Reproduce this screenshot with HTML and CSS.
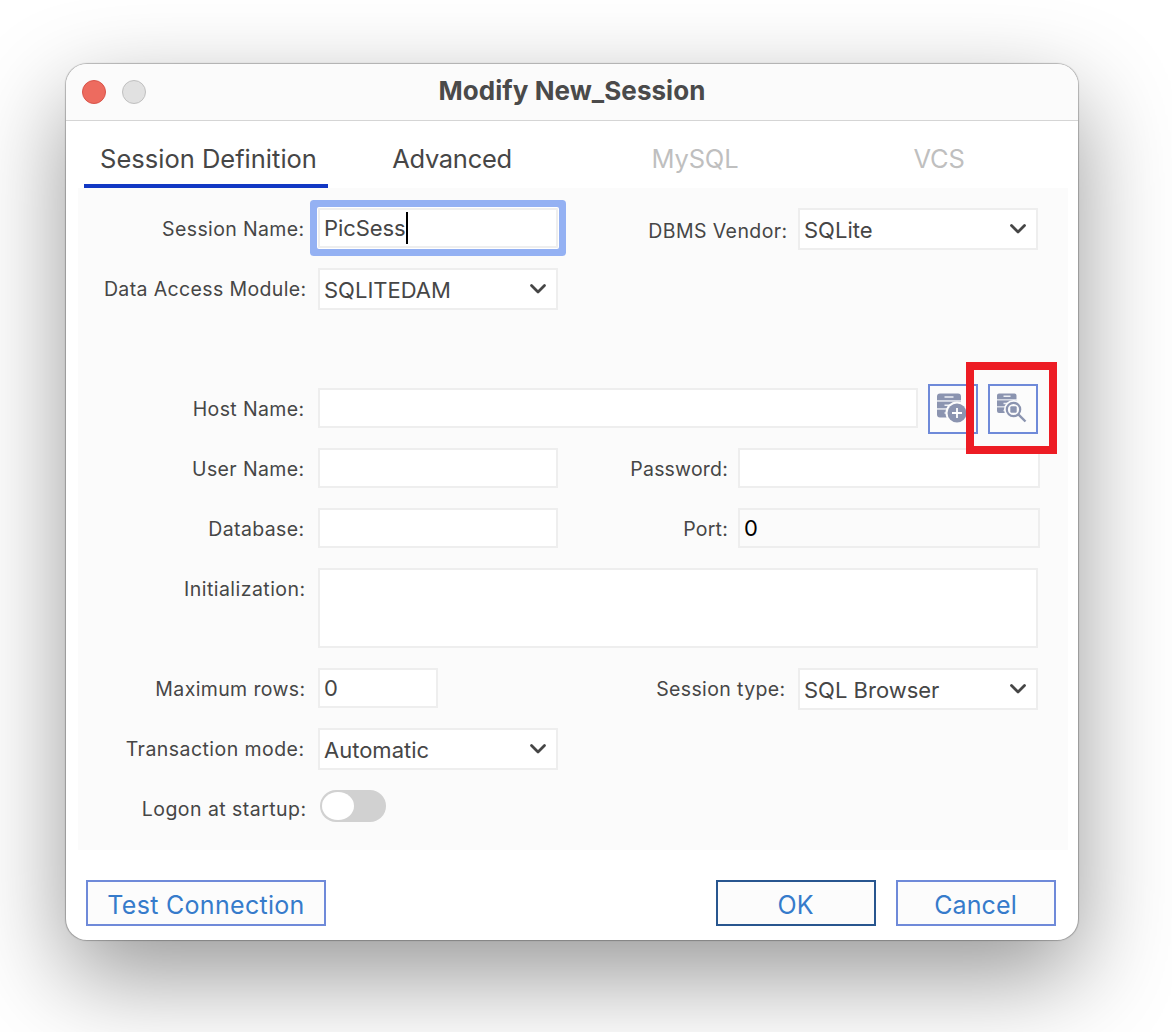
FILE: index.html
```html
<!DOCTYPE html>
<html lang="en">
<head>
<meta charset="utf-8">
<title>Modify New_Session</title>
<link rel="stylesheet" href="styles.css">
</head>
<body>
<main class="window">
  <header class="titlebar">
    <span class="light close"></span><span class="light minimize"></span>
    <h1 class="title">Modify New_Session</h1>
  </header>
  <nav class="tabs">
    <span class="tab active">Session Definition</span>
    <span class="tab advanced">Advanced</span>
    <span class="tab disabled">MySQL</span>
    <span class="tab disabled">VCS</span>
  </nav>
  <section class="panel">
    <div class="row">
      <label class="label">Session Name:</label>
      <div class="input focused">PicSess<i class="caret"></i></div>
      <label class="label side wide vendor">DBMS Vendor:</label>
      <div class="select">SQLite<svg class="chevron" viewBox="0 0 18 12"><path d="M2.500 2.500 9 9l6.500-6.500"/></svg></div>
    </div>
    <div class="row tall">
      <label class="label near">Data Access Module:</label>
      <div class="select">SQLITEDAM<svg class="chevron" viewBox="0 0 18 12"><path d="M2.500 2.500 9 9l6.500-6.500"/></svg></div>
    </div>
    <div class="row">
      <label class="label">Host Name:</label>
      <div class="input host"></div>
      <div class="tools">
        <button class="tool" aria-label="Add host">
          <svg width="46" height="46" viewBox="0 0 46 46">
            <path class="ink" d="M7 10.500q0-3 3-3h18q3 0 3 3V14H7zM7 15.600h24V22H7zM7 23.600h24V28.500q0 3-3 3H10q-3 0-3-3z"/>
            <path class="faint" d="M7 14h24v1.600H7zM7 22h24v1.600H7z"/>
            <path class="slot" d="M14.500 11h9M14.500 19.300h9M14.500 27h5"/>
            <circle class="halo" cx="27" cy="27" r="11.500"/><circle class="ink" cx="27" cy="27" r="9.500"/>
            <path class="plus" d="M22 27h10M27 22v10"/>
          </svg>
        </button>
        <button class="tool" aria-label="Browse hosts">
          <svg width="46" height="46" viewBox="0 0 46 46">
            <path class="ink" d="M7 9.500q0-2 2-2h15.500q2 0 2 2V13H7zM7 14.300h19.500V20H7zM7 21.300h19.500V27H9q-2 0-2-2z"/>
            <path class="faint" d="M7 13h19.500v1.300H7zM7 20h19.500v1.300H7z"/>
            <path class="slot" d="M13.500 10.300h7M13.500 17.500h7M13.500 24.500h5"/>
            <circle class="halo" cx="23.500" cy="23.500" r="9.500"/>
            <circle class="lens" cx="23.500" cy="23.500" r="6.700"/>
            <rect class="ink" x="20.300" y="20.300" width="6.400" height="6.400" rx="1.200"/>
            <path class="handle" d="m28.300 28.300 7.200 7.200"/>
          </svg>
        </button>
        <span class="highlight"></span>
      </div>
    </div>
    <div class="row">
      <label class="label">User Name:</label>
      <div class="input"></div>
      <label class="label side">Password:</label>
      <div class="input large"></div>
    </div>
    <div class="row">
      <label class="label">Database:</label>
      <div class="input"></div>
      <label class="label side">Port:</label>
      <div class="input large readonly">0</div>
    </div>
    <div class="row area-row">
      <label class="label near1 loose">Initialization:</label>
      <div class="input area"></div>
    </div>
    <div class="row">
      <label class="label near1">Maximum rows:</label>
      <div class="input small">0</div>
      <label class="label side type">Session type:</label>
      <div class="select">SQL Browser<svg class="chevron" viewBox="0 0 18 12"><path d="M2.500 2.500 9 9l6.500-6.500"/></svg></div>
    </div>
    <div class="row">
      <label class="label loose">Transaction mode:</label>
      <div class="select">Automatic<svg class="chevron" viewBox="0 0 18 12"><path d="M2.500 2.500 9 9l6.500-6.500"/></svg></div>
    </div>
    <div class="row">
      <label class="label near loose">Logon at startup:</label>
      <div class="switch"><i class="knob"></i></div>
    </div>
  </section>
  <footer class="actions">
    <button class="button test">Test Connection</button>
    <button class="button ok">OK</button>
    <button class="button">Cancel</button>
  </footer>
</main>
</body>
</html>
```
FILE: styles.css
```css
* { box-sizing: border-box; }
body {
  margin: 0;
  height: 1032px;
  padding: 64px 0 0 66px;
  overflow: hidden;
  background: #fff;
  color: #464646;
  font-family: Inter, "Liberation Sans", sans-serif;
}
.window {
  width: 1012px;
  height: 876px;
  display: flex;
  flex-direction: column;
  border-radius: 21px;
  background: #fff;
  box-shadow: 0 0 1px 1px rgba(0,0,0,.25), 0 36px 96px rgba(0,0,0,.41);
}
.titlebar {
  height: 57px;
  flex: none;
  display: flex;
  align-items: center;
  gap: 16px;
  padding: 0 16px;
  border-bottom: 1px solid #d5d5d5;
  border-radius: 21px 21px 0 0;
  background: #fbfbfb;
}
.light { width: 24px; height: 24px; border-radius: 50%; }
.close { background: #ed6b5f; border: 1px solid #d9544a; }
.minimize { background: #e1e1e1; border: 1px solid #c0c0c0; }
.title {
  flex: 1;
  margin: -3px 80px 0 0;
  text-align: center;
  font-size: 26px;
  font-weight: 700;
  letter-spacing: .05px;
  color: #4a4a4a;
  white-space: nowrap;
}
.tabs { display: flex; height: 67px; flex: none; padding: 0 18px; }
.tab {
  width: 244px;
  padding: 11px 0 0 4px;
  display: flex;
  align-items: center;
  justify-content: center;
  border-bottom: 4px solid transparent;
  font-size: 25.500px;
  white-space: nowrap;
}
.active { padding-left: 5px; border-color: #1238c4; }
.advanced { letter-spacing: -.3px; }
.disabled { padding-left: 2px; color: #bfbfbf; letter-spacing: -.2px; }
.panel {
  width: 990px;
  height: 662px;
  flex: none;
  margin-left: 12px;
  padding-top: 20px;
  background: #fbfbfb;
}
.row { display: flex; height: 60px; align-items: flex-start; }
.tall { height: 120px; }
.area-row { height: 100px; }
.label {
  width: 240px;
  flex: none;
  padding-right: 13.500px;
  text-align: right;
  font-size: 19.500px;
  line-height: 42px;
  letter-spacing: .37px;
  white-space: nowrap;
}
.near { padding-right: 11.500px; }
.near1 { padding-right: 12.500px; }
.loose { letter-spacing: .45px; }
.side { width: 180px; padding-right: 10px; letter-spacing: .2px; }
.wide { width: 240px; }
.vendor { padding-right: 10.500px; line-height: 46px; letter-spacing: .4px; }
.type { width: 360px; padding-right: 12.500px; letter-spacing: .37px; }
.input, .select {
  width: 240px;
  height: 40px;
  flex: none;
  display: flex;
  align-items: center;
  padding: 0 4px;
  border: 2px solid #eee;
  background: #fff;
  font-size: 22px;
  white-space: nowrap;
}
.select { height: 42px; padding-top: 1px; justify-content: space-between; }
.chevron { width: 18px; height: 12px; margin: -1px 5px 0 0; fill: none; stroke: #464646; stroke-width: 2.800; stroke-linecap: round; stroke-linejoin: round; }
.focused { box-shadow: 0 0 0 1px #fff, 0 0 0 8px #94b1f3; border-radius: 1px; letter-spacing: -.1px; }
.caret { width: 2px; height: 32px; margin-left: 1px; background: #000; }
.host { width: 600px; }
.large { width: 302px; }
.small { width: 120px; }
.area { width: 720px; height: 80px; }
.readonly { background: #fbfbfb; color: #000; }
.tools { position: relative; display: flex; gap: 10px; margin: -4px 0 0 10px; }
.tool { width: 50px; height: 50px; padding: 0; border: 2px solid #6f8ad9; background: #fcfcfc; }
.tool svg { display: block; }
.ink { fill: #8b94b0; }
.faint { fill: #d5d9e4; }
.slot { fill: none; stroke: #eef0f5; stroke-width: 1.500; }
.halo { fill: #fcfcfc; }
.plus { fill: none; stroke: #fff; stroke-width: 1.800; }
.lens { fill: #fcfcfc; stroke: #8b94b0; stroke-width: 2.200; }
.handle { fill: none; stroke: #8b94b0; stroke-width: 2.400; }
.highlight { position: absolute; left: 38px; top: -22px; width: 91px; height: 92px; border: 8px solid #ed1c24; }
.switch { width: 66px; height: 32px; margin: 2px 0 0 2px; padding: 2px; border-radius: 16px; background: #d1d1d1; }
.knob { display: block; width: 32px; height: 28px; border-radius: 50%; background: #fff; }
.actions { display: flex; gap: 20px; padding: 30px 22px 0 20px; }
.button {
  width: 160px;
  height: 46px;
  padding: 4px 1px 0 0;
  border: 2px solid #6f8ad9;
  background: #fcfcfc;
  color: #367bcb;
  font: 25px Inter, "Liberation Sans", sans-serif;
  letter-spacing: .1px;
  white-space: nowrap;
}
.test { width: 240px; margin-right: auto; padding-right: 0; letter-spacing: .3px; }
.ok { border-color: #28568f; }
```
